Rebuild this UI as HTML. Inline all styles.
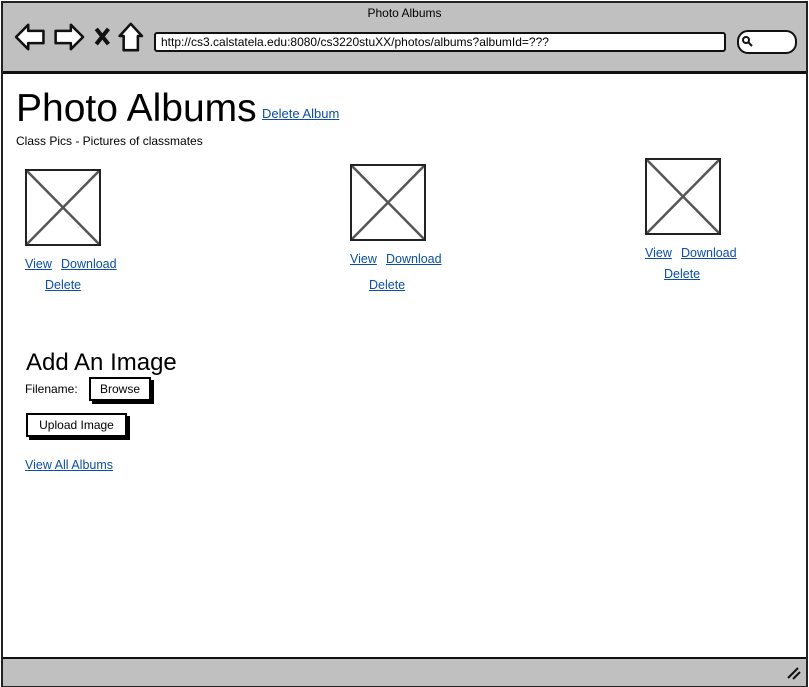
<!DOCTYPE html>
<html><head><style>
body{margin:0;width:809px;height:686px;position:relative;background:#fff;font-family:"Liberation Sans",sans-serif;overflow:hidden}
.a{position:absolute;white-space:nowrap}
.l{position:absolute;color:#0b4ea2;text-decoration:underline;font-size:12.5px;white-space:nowrap;line-height:14px}
.img{position:absolute;width:72px;height:73px;border:2px solid #222;background:#fff}
.btn{position:absolute;border:2px solid #000;box-shadow:3px 3px 0 #000;background:#fff;font-size:12px;text-align:center;box-sizing:border-box}
</style></head><body>
<div class="a" style="left:1px;top:1px;width:803px;height:682px;border:2px solid #222;"></div>
<div class="a" style="left:3px;top:3px;width:803px;height:68px;background:#c0c0c0;border-bottom:3px solid #111"></div>
<div class="a" style="left:0;width:809px;top:6px;text-align:center;font-size:12px">Photo Albums</div>
<svg class="a" style="left:14px;top:21px" width="132" height="32" viewBox="0 0 130 30" fill="#fff" stroke="#111" stroke-width="2.5" stroke-linejoin="round">
<path d="M2 15 L14 3 L14 9 L29 9 L29 21 L14 21 L14 27 Z"/>
<path d="M68 15 L56 3 L56 9 L41 9 L41 21 L56 21 L56 27 Z"/>
<path d="M81 7 L93 22 M93 7 L81 22" stroke-width="4"/>
<path d="M115 2 L104 14 L108 14 L108 28 L122 28 L122 14 L126 14 Z"/>
</svg>
<div class="a" style="left:154px;top:32px;width:563px;height:16px;border:2px solid #111;border-radius:3px;background:#fff;font-size:12px;line-height:16px;padding-left:5px">http://cs3.calstatela.edu:8080/cs3220stuXX/photos/albums?albumId=???</div>
<div class="a" style="left:737px;top:30px;width:56px;height:20px;border:2px solid #111;border-radius:11px;background:#fff"></div>
<svg class="a" style="left:741px;top:35px" width="12" height="12"><circle cx="5" cy="5" r="3" fill="none" stroke="#111" stroke-width="2"/><path d="M7 7 L11 11" stroke="#111" stroke-width="2"/></svg>
<div class="a" style="left:3px;top:657px;width:803px;height:27px;background:#c0c0c0;border-top:2px solid #111"></div>
<svg class="a" style="left:786px;top:666px" width="16" height="14"><path d="M2 12 L12 2 M7 13 L14 6" stroke="#111" stroke-width="2"/></svg>

<div class="a" style="left:16px;top:86px;font-size:39px;line-height:45px">Photo Albums</div>
<div class="l" style="left:262px;top:107px;font-size:13px">Delete Album</div>
<div class="a" style="left:16px;top:134px;font-size:12px">Class Pics - Pictures of classmates</div>

<svg class="img" style="left:25px;top:169px" viewBox="0 0 72 73"><path d="M0 0L72 73M72 0L0 73" stroke="#555" stroke-width="2.5"/></svg>
<div class="l" style="left:25px;top:257px">View</div><div class="l" style="left:61px;top:257px">Download</div><div class="l" style="left:45px;top:278px">Delete</div>
<svg class="img" style="left:350px;top:164px" viewBox="0 0 72 73"><path d="M0 0L72 73M72 0L0 73" stroke="#555" stroke-width="2.5"/></svg>
<div class="l" style="left:350px;top:252px">View</div><div class="l" style="left:386px;top:252px">Download</div><div class="l" style="left:369px;top:278px">Delete</div>
<svg class="img" style="left:645px;top:158px" viewBox="0 0 72 73"><path d="M0 0L72 73M72 0L0 73" stroke="#555" stroke-width="2.5"/></svg>
<div class="l" style="left:645px;top:246px">View</div><div class="l" style="left:681px;top:246px">Download</div><div class="l" style="left:664px;top:267px">Delete</div>

<div class="a" style="left:26px;top:349px;font-size:24px;line-height:28px">Add An Image</div>
<div class="a" style="left:25px;top:382px;font-size:12px">Filename:</div>
<div class="btn" style="left:89px;top:377px;width:62px;height:24px;line-height:20px">Browse</div>
<div class="btn" style="left:26px;top:413px;width:101px;height:24px;line-height:20px">Upload Image</div>
<div class="l" style="left:25px;top:458px">View All Albums</div>
</body></html>
